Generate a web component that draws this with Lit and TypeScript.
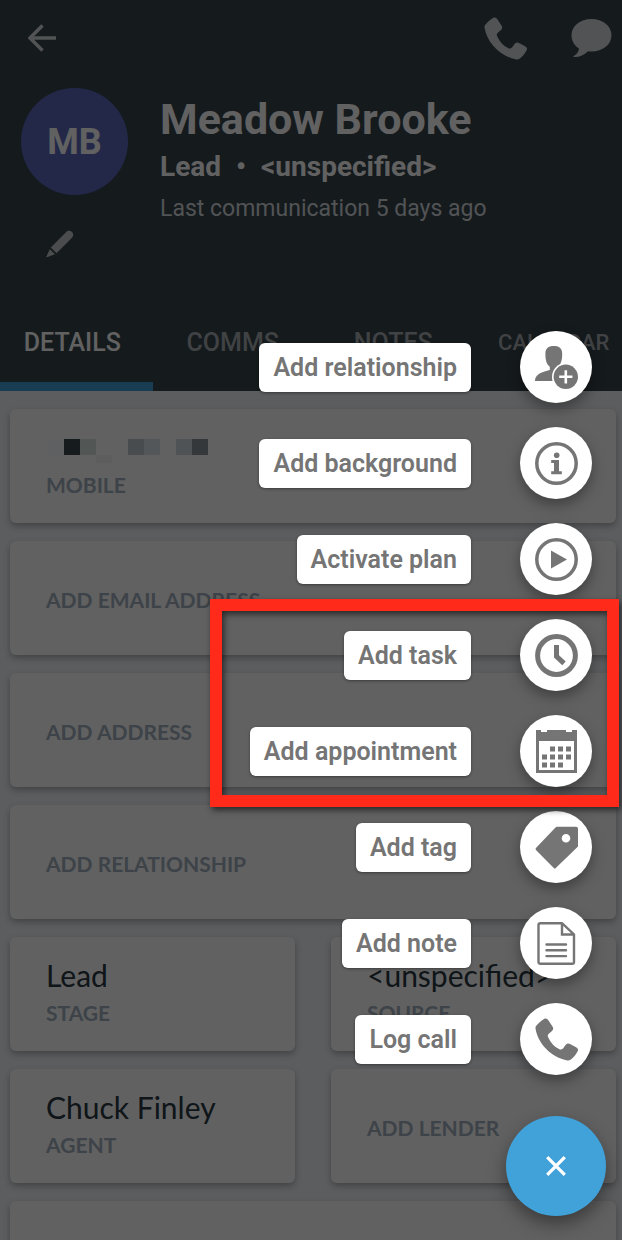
import { LitElement, html, css, svg } from "lit";
import { customElement, state } from "lit/decorators.js";

const phonePath =
  "M9 1 C11 0 12.500 1 13.500 2.500 L17.500 8.500 C18.500 10 18.500 11.500 17 13 L13.500 16 C12.500 17 12.500 18.500 13.500 20 C16 25 19 28.500 24 31 C25.500 32 27 31.500 28 30.500 L30.500 27 C31.500 25.500 33.500 25 35 26 L41.500 29.500 C43 30.500 43.500 32 42.500 33.500 C41 36.500 38.500 39.500 35.500 41.800 C34.500 42.600 33 42.700 31.500 42.300 C16 39 3 25.500 .6 11 C.3 9.500 .5 8.500 1.500 7.500 C4 4.500 6.500 2.500 9 1 Z";

const icons = {
  back: svg`<svg class="i28" viewBox="0 0 28 28" aria-hidden="true"><path d="M14.500 1.500 L2 14 L14.500 26.500 M2 14 H28" fill="none" stroke="currentColor" stroke-width="3.400"/></svg>`,
  phone: svg`<svg class="i43" viewBox="0 0 43 43" aria-hidden="true"><path d="${phonePath}" fill="currentColor"/></svg>`,
  chat: svg`<svg class="i41" viewBox="0 0 41 40" aria-hidden="true"><path d="M20.500 1 C31.800 1 40.500 8 40.500 17.300 C40.500 26.600 31.800 33.500 20.500 33.500 C19.300 33.500 18 33.400 17 33.300 C13 37.500 8 39.300 3 39 C2.200 39 2.200 38.200 3 37.800 C6 36 7.500 34 8 30.500 C3.200 27.500 .5 22.800 .5 17.300 C.5 8 9.200 1 20.500 1 Z" fill="currentColor"/></svg>`,
  pencil: svg`<svg class="i28" viewBox="0 0 28 28" aria-hidden="true"><path d="M4.800 17.500 L20 2.200 C21.500 .6 24 .3 25.800 1.800 C27.700 3.500 27.700 6 26 7.800 L10.500 23.200 Z M3.800 19.200 L9 24.300 L.8 27.300 C.3 27.400 .2 27.200 .4 26.700 Z" fill="currentColor"/></svg>`,
  person: svg`<svg class="i43" viewBox="0 0 43 43" aria-hidden="true"><path d="M18.800 0 C24.500 0 27.200 2.600 27.200 8 C27.200 14.500 25.800 18.500 22.800 20.800 V24 C19 26.500 17 31 18 35 H0 C0 29.500 4.500 26.300 14.800 24 V20.800 C11.800 18.500 10.400 14.500 10.400 8 C10.400 2.600 13.100 0 18.800 0 Z" fill="currentColor"/><circle cx="30.800" cy="30.800" r="13.800" fill="#fff"/><circle cx="30.800" cy="30.800" r="12.200" fill="currentColor"/><path d="M30.800 24.200 V37.400 M24.200 30.800 H37.400" stroke="#fff" stroke-width="2.600"/></svg>`,
  info: svg`<svg class="i43" viewBox="0 0 43 43" aria-hidden="true"><circle cx="21.500" cy="21.500" r="19.700" fill="none" stroke="currentColor" stroke-width="3.500"/><circle cx="21.700" cy="13.200" r="2.800" fill="currentColor"/><path d="M16.200 18 H24 V29.300 H26.800 V32.200 H16.200 V29.300 H19 V21 H16.200 Z" fill="currentColor"/></svg>`,
  play: svg`<svg class="i43" viewBox="0 0 43 43" aria-hidden="true"><circle cx="21.500" cy="21.500" r="19.700" fill="none" stroke="currentColor" stroke-width="3.500"/><path d="M16 12.500 L32 21.500 L16 30.500 Z" fill="currentColor"/></svg>`,
  clock: svg`<svg class="i43" viewBox="0 0 43 43" aria-hidden="true"><circle cx="21.500" cy="21.500" r="18.900" fill="none" stroke="currentColor" stroke-width="5"/><path d="M21.500 11 V22.300 L29 29.300" fill="none" stroke="currentColor" stroke-width="5"/></svg>`,
  calendar: svg`<svg class="i43" viewBox="0 0 43 43" aria-hidden="true"><path d="M1 0 H6 V2 H12 V0 H31 V2 H37 V0 H42 V43 H1 Z" fill="currentColor"/><path d="M4 11 H39 V40 H4 Z" fill="#fff"/><path d="M15 16.500h5v5h-5z M23 16.500h5v5h-5z M31 16.500h5v5h-5z M7 24.500h5v5h-5z M15 24.500h5v5h-5z M23 24.500h5v5h-5z M31 24.500h5v5h-5z M7 32.500h5v5h-5z M15 32.500h5v5h-5z M23 32.500h5v5h-5z" fill="currentColor"/></svg>`,
  tag: svg`<svg class="i43" viewBox="0 0 43 43" aria-hidden="true"><path fill-rule="evenodd" d="M22.500 .8 H41 C42.200 .8 43 1.600 43 2.800 V20.500 L20.800 42 C20 42.800 19.500 42.800 18.800 42 L1.200 24.200 C.4 23.400 .4 22.600 1.200 21.800 L20 2 C20.800 1.100 21.500 .8 22.500 .8 Z M31 8 A4.300 4.300 0 1 0 31 16.600 A4.300 4.300 0 1 0 31 8 Z" fill="currentColor"/></svg>`,
  note: svg`<svg class="i43" viewBox="0 0 43 43" aria-hidden="true"><path d="M5.500 1.200 H27 L39 12.500 V40 C39 41.200 38.400 41.800 37.200 41.800 H5.500 C4.300 41.800 3.500 41.200 3.500 40 V3 C3.500 1.800 4.300 1.200 5.500 1.200 Z M27 1.200 V12.500 H39" fill="none" stroke="currentColor" stroke-width="2.400"/><path d="M11.500 22.500 H31 M11.500 28.300 H31 M11.500 34.100 H31" stroke="currentColor" stroke-width="2.400" stroke-linecap="round"/></svg>`,
  close: svg`<svg class="i20" viewBox="0 0 20 20" aria-hidden="true"><path d="M1.200 1.200 L18.800 18.800 M18.800 1.200 L1.200 18.800" stroke="currentColor" stroke-width="3.300"/></svg>`,
};

type IconName = keyof typeof icons;
interface Action {
  label: string;
  icon: IconName;
}

const before: Action[] = [
  { label: "Add relationship", icon: "person" },
  { label: "Add background", icon: "info" },
  { label: "Activate plan", icon: "play" },
];
const highlighted: Action[] = [
  { label: "Add task", icon: "clock" },
  { label: "Add appointment", icon: "calendar" },
];
const after: Action[] = [
  { label: "Add tag", icon: "tag" },
  { label: "Add note", icon: "note" },
  { label: "Log call", icon: "phone" },
];
const tabs = ["DETAILS", "COMMS", "NOTES", "CALENDAR"];

@customElement("app-root")
export class AppRoot extends LitElement {
  @state() private active = "DETAILS";

  static styles = css`
    :host {
      display: block;
      font-family: Roboto, "Liberation Sans", sans-serif;
    }
    * {
      box-sizing: border-box;
    }
    button {
      font: inherit;
      color: inherit;
      background: none;
      border: 0;
      margin: 0;
      padding: 0;
      text-align: left;
      cursor: pointer;
    }
    svg {
      display: block;
      flex: none;
    }
    .i20 { width: 20px; height: 20px; }
    .i28 { width: 28px; height: 28px; }
    .i41 { width: 41px; height: 40px; }
    .i43 { width: 43px; height: 43px; }
    .screen {
      position: relative;
      height: 100vh;
      overflow: hidden;
      display: flex;
      flex-direction: column;
      background: #f0f3f8;
    }
    header {
      flex: none;
      background: #37444e;
      color: #fff;
      overflow: hidden;
    }
    .bar {
      display: flex;
      align-items: center;
      gap: 44px;
      height: 76px;
      padding: 0 10px 0 28px;
      color: #d8dadc;
    }
    .bar .back {
      margin-right: auto;
    }
    .profile {
      display: grid;
      grid-template-columns: 107px 1fr;
      gap: 32px;
      padding: 12px 21px 35px;
    }
    .side {
      display: flex;
      flex-direction: column;
      gap: 35px;
    }
    .avatar {
      display: grid;
      place-items: center;
      width: 107px;
      height: 107px;
      border-radius: 50%;
      background: #5c6bc0;
      font-size: 36px;
      font-weight: 700;
    }
    .edit {
      align-self: flex-start;
      margin-left: 25px;
      color: #c4c8cb;
    }
    h1 {
      margin: 6px 0;
      font-size: 43px;
      line-height: 50px;
      font-weight: 700;
    }
    .role {
      display: flex;
      gap: 15px;
      margin: 0 0 11px;
      font-size: 28px;
      line-height: 34px;
      font-weight: 700;
    }
    .last {
      margin: 0;
      font-size: 23px;
      line-height: 28px;
      color: #d5dade;
    }
    .tabs {
      display: grid;
      grid-template-columns: repeat(4, 1fr);
      margin: 0 -12px 0 -8px;
      height: 98px;
      font-size: 25px;
      font-weight: 500;
    }
    .tab {
      text-align: center;
      color: #a8aeb4;
      border: solid transparent;
      border-width: 9px 0;
    }
    .tab.long {
      font-size: 22px;
    }
    .tab.on {
      color: #fff;
      border-bottom-color: #41a1d9;
    }
    main {
      display: grid;
      grid-template-columns: 1fr 1fr;
      grid-auto-rows: 114px;
      gap: 18px 36px;
      padding: 18px 6px 0 10px;
      font-family: Lato, "Open Sans", sans-serif;
    }
    .card {
      display: flex;
      flex-direction: column;
      justify-content: center;
      gap: 10px;
      padding: 4px 36px 0;
      border-radius: 6px;
      background: #fff;
      box-shadow: 0 3px 6px rgba(0, 0, 0, 0.28);
      white-space: nowrap;
    }
    .card.filled {
      padding: 0 36px 4px;
    }
    .wide {
      grid-column: 1 / -1;
    }
    .value {
      font-size: 30px;
      line-height: 32px;
      color: #28373f;
    }
    .label {
      font-size: 21px;
      line-height: 24px;
      font-weight: 700;
      color: #a0b0be;
    }
    .masked {
      width: 176px;
      height: 32px;
    }
    .scrim {
      position: absolute;
      inset: 0;
      background: rgba(0, 0, 0, 0.62);
    }
    .menu {
      position: absolute;
      right: 16px;
      bottom: 24px;
      display: flex;
      flex-direction: column;
      align-items: flex-end;
      gap: 41px;
    }
    .actions,
    .group {
      display: flex;
      flex-direction: column;
      align-items: flex-end;
      gap: 24px;
    }
    .actions {
      padding-right: 14px;
    }
    .group {
      position: relative;
    }
    .frame {
      position: absolute;
      inset: -20px -27px -20px -40px;
      border: 12px solid #ff2a1a;
      filter: drop-shadow(2px 3px 3px rgba(0, 0, 0, 0.6));
      pointer-events: none;
    }
    .action {
      display: flex;
      align-items: center;
      gap: 49px;
      color: #757575;
    }
    .chip {
      padding: 0 14px;
      border-radius: 6px;
      background: #fff;
      box-shadow: 0 1px 3px rgba(0, 0, 0, 0.4);
      font-size: 25px;
      line-height: 49px;
      font-weight: 600;
    }
    .disc {
      display: grid;
      place-items: center;
      width: 72px;
      height: 72px;
      border-radius: 50%;
      background: #fff;
      box-shadow: 0 6px 14px rgba(0, 0, 0, 0.35);
    }
    .fab {
      display: grid;
      place-items: center;
      width: 100px;
      height: 100px;
      border-radius: 50%;
      background: #41a1d9;
      color: #fff;
      box-shadow: 0 8px 18px rgba(0, 0, 0, 0.4);
    }
  `;

  private action(a: Action) {
    return html`<button class="action">
      <span class="chip">${a.label}</span><span class="disc">${icons[a.icon]}</span>
    </button>`;
  }

  private card(label: string, value = "", wide = false) {
    return html`<button class="card ${wide ? "wide" : ""} ${value ? "filled" : ""}">
      ${value ? html`<span class="value">${value}</span>` : ""}
      <span class="label">${label}</span>
    </button>`;
  }

  render() {
    return html`<div class="screen">
      <header>
        <div class="bar">
          <button class="back" aria-label="Back">${icons.back}</button>
          <button aria-label="Call">${icons.phone}</button>
          <button aria-label="Message">${icons.chat}</button>
        </div>
        <div class="profile">
          <div class="side">
            <div class="avatar">MB</div>
            <button class="edit" aria-label="Edit">${icons.pencil}</button>
          </div>
          <div>
            <h1>Meadow Brooke</h1>
            <p class="role"><span>Lead</span><span>•</span><span>&lt;unspecified&gt;</span></p>
            <p class="last">Last communication 5 days ago</p>
          </div>
        </div>
        <nav class="tabs">
          ${tabs.map(
            (t) => html`<button
              class="tab ${t === this.active ? "on" : ""} ${t.length > 7 ? "long" : ""}"
              @click=${() => (this.active = t)}
            >${t}</button>`
          )}
        </nav>
      </header>
      <main>
        <button class="card wide filled">
          <svg class="masked" viewBox="0 0 176 32" shape-rendering="crispEdges" role="img" aria-label="Hidden number">
            <path d="M2 8h16v16h-16z" fill="#fafcff" />
            <path d="M18 8h16v16h-16z" fill="#3a474f" />
            <path d="M34 8h16v16h-16z" fill="#d8e2de" />
            <path d="M50 24h16v8h-16z" fill="#f5f5f5" />
            <path d="M82 8h16v16h-16z" fill="#bdc8d0" />
            <path d="M98 8h16v16h-16z" fill="#dae4eb" />
            <path d="M130 8h16v16h-16z" fill="#d0dbe1" />
            <path d="M146 8h16v16h-16z" fill="#88939a" />
          </svg>
          <span class="label">MOBILE</span>
        </button>
        ${this.card("ADD EMAIL ADDRESS", "", true)}
        ${this.card("ADD ADDRESS", "", true)}
        ${this.card("ADD RELATIONSHIP", "", true)}
        ${this.card("STAGE", "Lead")}
        ${this.card("SOURCE", "<unspecified>")}
        ${this.card("AGENT", "Chuck Finley")}
        ${this.card("ADD LENDER")}
        <div class="card wide"></div>
      </main>
      <div class="scrim"></div>
      <div class="menu">
        <div class="actions">
          ${before.map((a) => this.action(a))}
          <div class="group">
            ${highlighted.map((a) => this.action(a))}
            <div class="frame"></div>
          </div>
          ${after.map((a) => this.action(a))}
        </div>
        <button class="fab" aria-label="Close menu">${icons.close}</button>
      </div>
    </div>`;
  }
}
